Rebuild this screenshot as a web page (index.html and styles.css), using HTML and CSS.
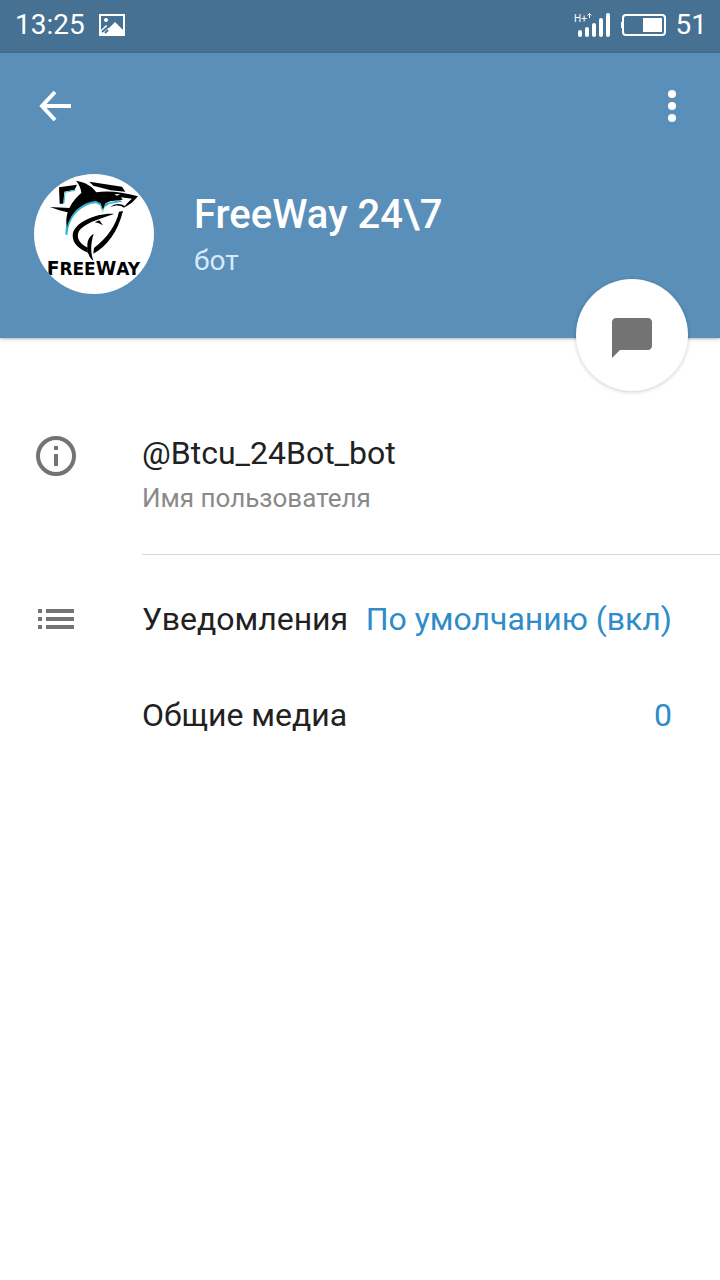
FILE: index.html
```html
<!DOCTYPE html>
<html lang="ru">

<head>
    <meta charset="UTF-8">
    <meta name="viewport" content="width=device-width, initial-scale=1.0">
    <title>FreeWay 24\7</title>
    <link rel="stylesheet" href="styles.css">
</head>

<body>
    <div class="status">
        <span>13:25</span>
        <svg class="status-picture" width="26" height="22" viewBox="0 0 26 22">
            <path fill="#fff" fill-rule="evenodd" d="M0 0H26V22H0ZM2 2V20H24V2Z"/>
            <path fill="#fff" d="M2 16L7 11L10 14L16 8L24 16V21H2Z"/>
            <circle cx="7" cy="6" r="2" fill="#fff"/>
            <path stroke="#467193" stroke-width="2" d="M3 18L10 12M6 19L9 16"/>
        </svg>
        <svg class="status-signal" width="37" height="28" viewBox="0 0 37 28">
            <text class="signal-type" x="0" y="11">H+</text>
            <path stroke="#fff" stroke-width="1" fill="none" d="M15.500 7V2M13.500 4.500L15.500 2.500L17.500 4.500"/>
            <path stroke="#fff" stroke-width="4" stroke-linecap="round" d="M6 21V24M13 18V24M20 14V24M27 9V24M34 4V24"/>
        </svg>
        <svg class="status-battery" width="45" height="24" viewBox="0 0 45 24">
            <rect x="2" y="2" width="42" height="20" rx="3" fill="none" stroke="#fff" stroke-width="2"/>
            <path fill="#fff" d="M0 9H2V15H0ZM22 5H41V19H22Z"/>
        </svg>
        <span>51</span>
    </div>

    <header class="header">
        <div class="toolbar">
            <button class="icon-button" aria-label="Назад">
                <svg width="48" height="48" viewBox="0 0 48 48">
                    <path fill="none" stroke="#fff" stroke-width="4" d="M40 24H12M24 10L11 24L24 38"/>
                </svg>
            </button>
            <button class="icon-button" aria-label="Меню">
                <svg width="48" height="48" viewBox="0 0 48 48">
                    <g fill="#fff">
                        <circle cx="24" cy="12" r="4"/>
                        <circle cx="24" cy="24" r="4"/>
                        <circle cx="24" cy="36" r="4"/>
                    </g>
                </svg>
            </button>
        </div>
        <div class="profile">
            <svg class="avatar" width="120" height="120" viewBox="42 42 360 360">
                <rect x="42" y="42" width="360" height="360" fill="#fff"/>
                <!-- frame behind the shark -->
                <path d="M117 82L171 74L164 89L133 95L130 131H119Z"/>
                <path d="M208 65L306 80L316 95L272 91L220 77Z"/>
                <path fill="none" stroke="#39c3dc" stroke-width="3" d="M166 91L135 97L132 130"/>
                <!-- blue glow under the body -->
                <path fill="#2fb4d6" d="M137 225C134 178 160 138 206 122L232 120L244 132L248 156L256 130L300 120L306 125L268 132L254 142L248 158L240 136L228 130L211 132C172 146 146 176 142 225Z"/>
                <!-- body and fins -->
                <path d="M90 141L148 144C158 124 172 109 184 99C183 84 176 71 168 62C194 66 216 78 229 97C264 91 305 96 354 109C343 123 329 135 312 143C317 133 327 124 336 116L303 112L308 119L270 124L256 130L249 150L242 130L228 123C188 125 151 157 141 202C137 185 139 171 143 157L118 151Z"/>
                <path fill="#fff" d="M284 102L301 103L290 107Z"/>
                <path d="M270 142C284 129 300 129 315 138L312 143C300 134 286 135 270 142Z"/>
                <!-- belly and tail -->
                <path d="M282 162C238 157 161 185 158 225C157 252 180 269 203 277L204 263C179 253 167 232 177 213C191 192 232 178 282 162Z"/>
                <path d="M309 153L297 155C288 195 263 232 222 264L220 281C262 258 293 216 309 153Z"/>
                <path d="M221 221C197 236 201 261 205 280C208 291 213 297 220 302C209 271 214 246 221 221Z"/>
                <path d="M182 263L206 276L214 290L202 277Z"/>
                <path d="M224 187L238 181L249 196L235 189Z"/>
                <text class="logo-text" x="80" y="344"><tspan class="logo-cap">F</tspan>REE<tspan class="logo-cap">W</tspan>AY</text>
            </svg>
            <div class="profile-text">
                <h1 class="name">FreeWay 24\7</h1>
                <p class="kind">бот</p>
            </div>
        </div>
        <button class="fab" aria-label="Написать сообщение">
            <svg width="48" height="48" viewBox="0 0 24 24">
                <path fill="#737373" d="M4 2H20C21.100 2 22 2.900 22 4V16C22 17.100 21.100 18 20 18H6L2 22V4C2 2.900 2.900 2 4 2Z"/>
            </svg>
        </button>
    </header>

    <main>
        <section class="info">
            <svg class="row-icon" width="48" height="48" viewBox="0 0 48 48">
                <circle cx="24" cy="24" r="18" fill="none" stroke="#737373" stroke-width="4"/>
                <path fill="#737373" d="M22 14H26V18H22ZM22 22H26V34H22Z"/>
            </svg>
            <div class="info-text">
                <p class="username">@Btcu_24Bot_bot</p>
                <p class="caption">Имя пользователя</p>
            </div>
        </section>
        <section class="settings">
            <button class="row">
                <svg class="row-icon" width="48" height="48" viewBox="0 0 48 48">
                    <path fill="#737373" d="M6 14H10V18H6ZM6 22H10V26H6ZM6 30H10V34H6ZM14 14H42V18H14ZM14 22H42V26H14ZM14 30H42V34H14Z"/>
                </svg>
                <span class="row-label">Уведомления</span>
                <span class="row-value">По умолчанию (вкл)</span>
            </button>
            <button class="row">
                <span class="row-icon"></span>
                <span class="row-label">Общие медиа</span>
                <span class="row-value">0</span>
            </button>
        </section>
    </main>
</body>

</html>
```
FILE: styles.css
```css
body {
    margin: 0;
    font-family: Roboto, sans-serif;
    background-color: #fff;
    color: #212121;
}

h1, p {
    margin: 0;
}

svg {
    display: block;
}

button {
    padding: 0;
    border: 0;
    background: none;
    font: inherit;
    color: inherit;
    cursor: pointer;
}

/* Status bar */
.status {
    display: flex;
    align-items: center;
    box-sizing: border-box;
    height: 53px;
    padding: 0 13px 3px 15px;
    background-color: #467193;
    color: #fff;
    font-size: 28px;
    line-height: 32px;
}

.status-picture {
    margin-left: 14px;
}

.status-signal {
    margin-left: auto;
}

.status-battery {
    margin: 0 10px;
}

.signal-type {
    font-size: 10px;
    fill: #fff;
}

/* Header */
.header {
    position: relative;
    padding-bottom: 44px;
    background-color: #598fb8;
    box-shadow: 0 1px 3px rgba(0, 0, 0, 0.3);
}

.toolbar {
    display: flex;
    justify-content: space-between;
    padding: 29px 24px 44px 31px;
}

.profile {
    display: flex;
    align-items: center;
    gap: 40px;
    padding: 0 34px;
}

.profile-text {
    padding-top: 6px;
}

.avatar {
    border-radius: 50%;
}

.logo-text {
    font-family: "DejaVu Sans", sans-serif;
    font-weight: bold;
    font-size: 51px;
}

.logo-cap {
    font-size: 56px;
}

.name {
    color: #fff;
    font-size: 40px;
    font-weight: 500;
    line-height: 48px;
}

.kind {
    color: #d7eafa;
    font-size: 28px;
    line-height: 44px;
}

.fab {
    position: absolute;
    right: 32px;
    bottom: -53px;
    display: flex;
    align-items: center;
    justify-content: center;
    box-sizing: border-box;
    width: 112px;
    height: 112px;
    padding-top: 6px;
    border-radius: 50%;
    background-color: #fff;
    box-shadow: 0 1px 4px rgba(0, 0, 0, 0.2);
}

/* Rows */
.info {
    display: flex;
    padding: 94px 0 0 32px;
}

.row-icon {
    flex: none;
    width: 48px;
    margin-right: 62px;
}

.info-text {
    flex: 1;
    padding-bottom: 32px;
    border-bottom: 1px solid #d9d9d9;
}

.username {
    font-size: 32px;
    line-height: 42px;
}

.caption {
    color: #8a8a8a;
    font-size: 26px;
    line-height: 48px;
}

.settings {
    padding-top: 16px;
}

.row {
    display: flex;
    align-items: center;
    width: 100%;
    height: 96px;
    padding: 0 48px 0 32px;
    font-size: 32px;
    text-align: left;
}

.row-value {
    margin-left: auto;
    color: #2f8cc9;
}
```
